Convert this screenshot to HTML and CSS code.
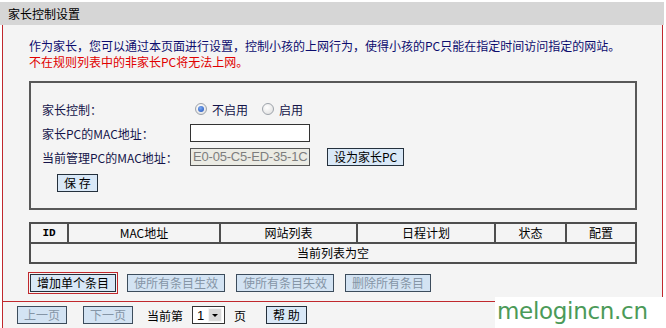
FILE: index.html
```html
<!DOCTYPE html>
<html lang="zh-CN">
<head>
    <meta charset="UTF-8">
    <title>家长控制设置</title>
    <link rel="stylesheet" href="styles.css">
</head>
<body>
    <div class="page">
        <div class="title">家长控制设置</div>
        <div class="panel">
            <div class="content">
                <p class="desc">作为家长，您可以通过本页面进行设置，控制小孩的上网行为，使得小孩的PC只能在指定时间访问指定的网站。</p>
                <p class="desc warn">不在规则列表中的非家长PC将无法上网。</p>

                <div class="setbox">
                    <div class="row">
                        <span class="label">家长控制：</span>
                        <span class="radio checked"></span><span class="rtext">不启用</span>
                        <span class="radio second"></span><span class="rtext">启用</span>
                    </div>
                    <div class="row">
                        <span class="label">家长PC的MAC地址：</span>
                        <span class="field"></span>
                    </div>
                    <div class="row">
                        <span class="label">当前管理PC的MAC地址：</span>
                        <span class="field off">E0-05-C5-ED-35-1C</span>
                        <span class="btn setpc">设为家长PC</span>
                    </div>
                    <div class="row saverow">
                        <span class="btn">保 存</span>
                    </div>
                </div>

                <table class="rules">
                    <colgroup>
                        <col style="width: 38px">
                        <col style="width: 152px">
                        <col style="width: 137px">
                        <col style="width: 138px">
                        <col style="width: 71px">
                        <col>
                    </colgroup>
                    <tr>
                        <td class="id">ID</td>
                        <td>MAC地址</td>
                        <td>网站列表</td>
                        <td>日程计划</td>
                        <td>状态</td>
                        <td>配置</td>
                    </tr>
                    <tr>
                        <td colspan="6">当前列表为空</td>
                    </tr>
                </table>

                <div class="actions">
                    <span class="btn focus">增加单个条目</span>
                    <span class="btn dis">使所有条目生效</span>
                    <span class="btn dis">使所有条目失效</span>
                    <span class="btn dis">删除所有条目</span>
                </div>
            </div>

            <div class="pager">
                <span class="btn dis">上一页</span>
                <span class="btn dis">下一页</span>
                <span class="ptext">当前第</span>
                <span class="select"><span class="num">1</span><span class="arrow"></span></span>
                <span class="ptext">页</span>
                <span class="btn help">帮 助</span>
            </div>
        </div>
        <div class="mark">melogincn.cn</div>
    </div>
</body>
</html>
```

FILE: styles.css
```css
body {
    margin: 0;
    background: #fff;
    font-family: "Noto Sans CJK SC", "Liberation Sans", sans-serif;
    font-size: 12px;
    color: #000;
}
.page {
    position: relative;
    width: 666px;
    height: 328px;
    overflow: hidden;
}
.title {
    margin-top: 2px;
    width: 656px;
    height: 23px;
    line-height: 23px;
    padding-left: 8px;
    background: #d6d6d6;
}
.panel {
    margin-left: 2px;
    width: 659px;
    background: #f4f4f4;
    border: 1px solid #c0282d;
    border-top: none;
}
.content {
    padding: 13px 0 9px 26px;
    border-bottom: 1px solid #c0282d;
}
.desc {
    margin: 0;
    line-height: 16px;
    color: #0c0c6e;
}
.desc.warn {
    color: #e00000;
}

/* settings box */
.setbox {
    margin-top: 11px;
    width: 604px;
    height: 125px;
    border: 2px solid #585858;
}
.row {
    display: flex;
    align-items: center;
    height: 24px;
    padding-left: 11px;
    color: #14144a;
}
.row:first-child {
    margin-top: 14px;
}
.label {
    width: 148px;
}
.radio {
    width: 10px;
    height: 10px;
    border-radius: 50%;
    border: 1px solid #9da3ab;
    background: radial-gradient(circle at 40% 35%, #fff, #dcdcdc);
    margin: 0 5px 0 5px;
    position: relative;
}
.radio.checked::after {
    content: "";
    position: absolute;
    left: 2px;
    top: 2px;
    width: 6px;
    height: 6px;
    border-radius: 50%;
    background: radial-gradient(circle at 40% 35%, #7aa8f0, #1c4fb8);
}
.radio.second {
    margin-left: 14px;
}
.rtext {
    color: #14144a;
}
.field {
    box-sizing: border-box;
    width: 120px;
    height: 18px;
    border: 1px solid #333;
    background: #fff;
    font-family: "Liberation Sans", sans-serif;
    font-size: 13px;
    line-height: 16px;
    padding-left: 2px;
    letter-spacing: -0.2px;
}
.field.off {
    background: #ebebe4;
    color: #7d7d7d;
    border-color: #555;
}
.btn {
    display: inline-block;
    box-sizing: border-box;
    height: 18px;
    line-height: 16px;
    padding: 0 6px;
    border: 1px solid #24303c;
    background: #d9e8f7;
    color: #000;
    white-space: nowrap;
}
.btn.setpc {
    margin-left: 17px;
}
.saverow {
    padding-left: 26px;
    height: 18px;
    margin-top: 5px;
}
.btn.dis {
    color: #8595a6;
    background: #d3e3f3;
    border-color: #3c4c5c;
}
.btn.focus {
    outline: 1px solid #c0282d;
    outline-offset: 1px;
}

/* rule table */
.rules {
    margin-top: 12px;
    width: 608px;
    border-collapse: collapse;
    table-layout: fixed;
    color: #000;
}
.rules td {
    border: 2px solid #4e4e4e;
    height: 18px;
    line-height: 16px;
    padding: 0;
    text-align: center;
}
.rules td.id {
    font-family: "Liberation Mono", monospace;
    font-weight: bold;
    font-size: 11px;
}
.actions {
    display: flex;
    gap: 11px;
    margin-top: 10px;
    padding-left: 1px;
}

/* pager */
.pager {
    display: flex;
    align-items: center;
    height: 26px;
    padding-left: 14px;
}
.pager .btn + .btn {
    margin-left: 16px;
}
.ptext {
    margin-left: 14px;
}
.select {
    display: flex;
    align-items: center;
    box-sizing: border-box;
    width: 33px;
    height: 18px;
    margin-left: 9px;
    border: 1px solid #333;
    background: #fff;
}
.num {
    width: 15px;
    text-align: center;
    font-family: "Liberation Sans", sans-serif;
    font-size: 13px;
}
.arrow {
    width: 14px;
    height: 14px;
    background: #d8d8d8;
    border: 1px solid #f4f4f4;
    box-sizing: border-box;
    position: relative;
}
.arrow::after {
    content: "";
    position: absolute;
    left: 3px;
    top: 5px;
    border-left: 3px solid transparent;
    border-right: 3px solid transparent;
    border-top: 3px solid #000;
}
.pager .ptext + .select + .ptext {
    margin-left: 9px;
}
.btn.help {
    margin-left: 20px;
}

/* watermark over the bottom right corner */
.mark {
    position: absolute;
    left: 495px;
    top: 297px;
    width: 171px;
    height: 31px;
    background: #fff;
    color: #4b9a58;
    font-family: "DejaVu Sans", sans-serif;
    font-size: 23px;
    line-height: 29px;
    padding-left: 2px;
    letter-spacing: -0.3px;
}
```
